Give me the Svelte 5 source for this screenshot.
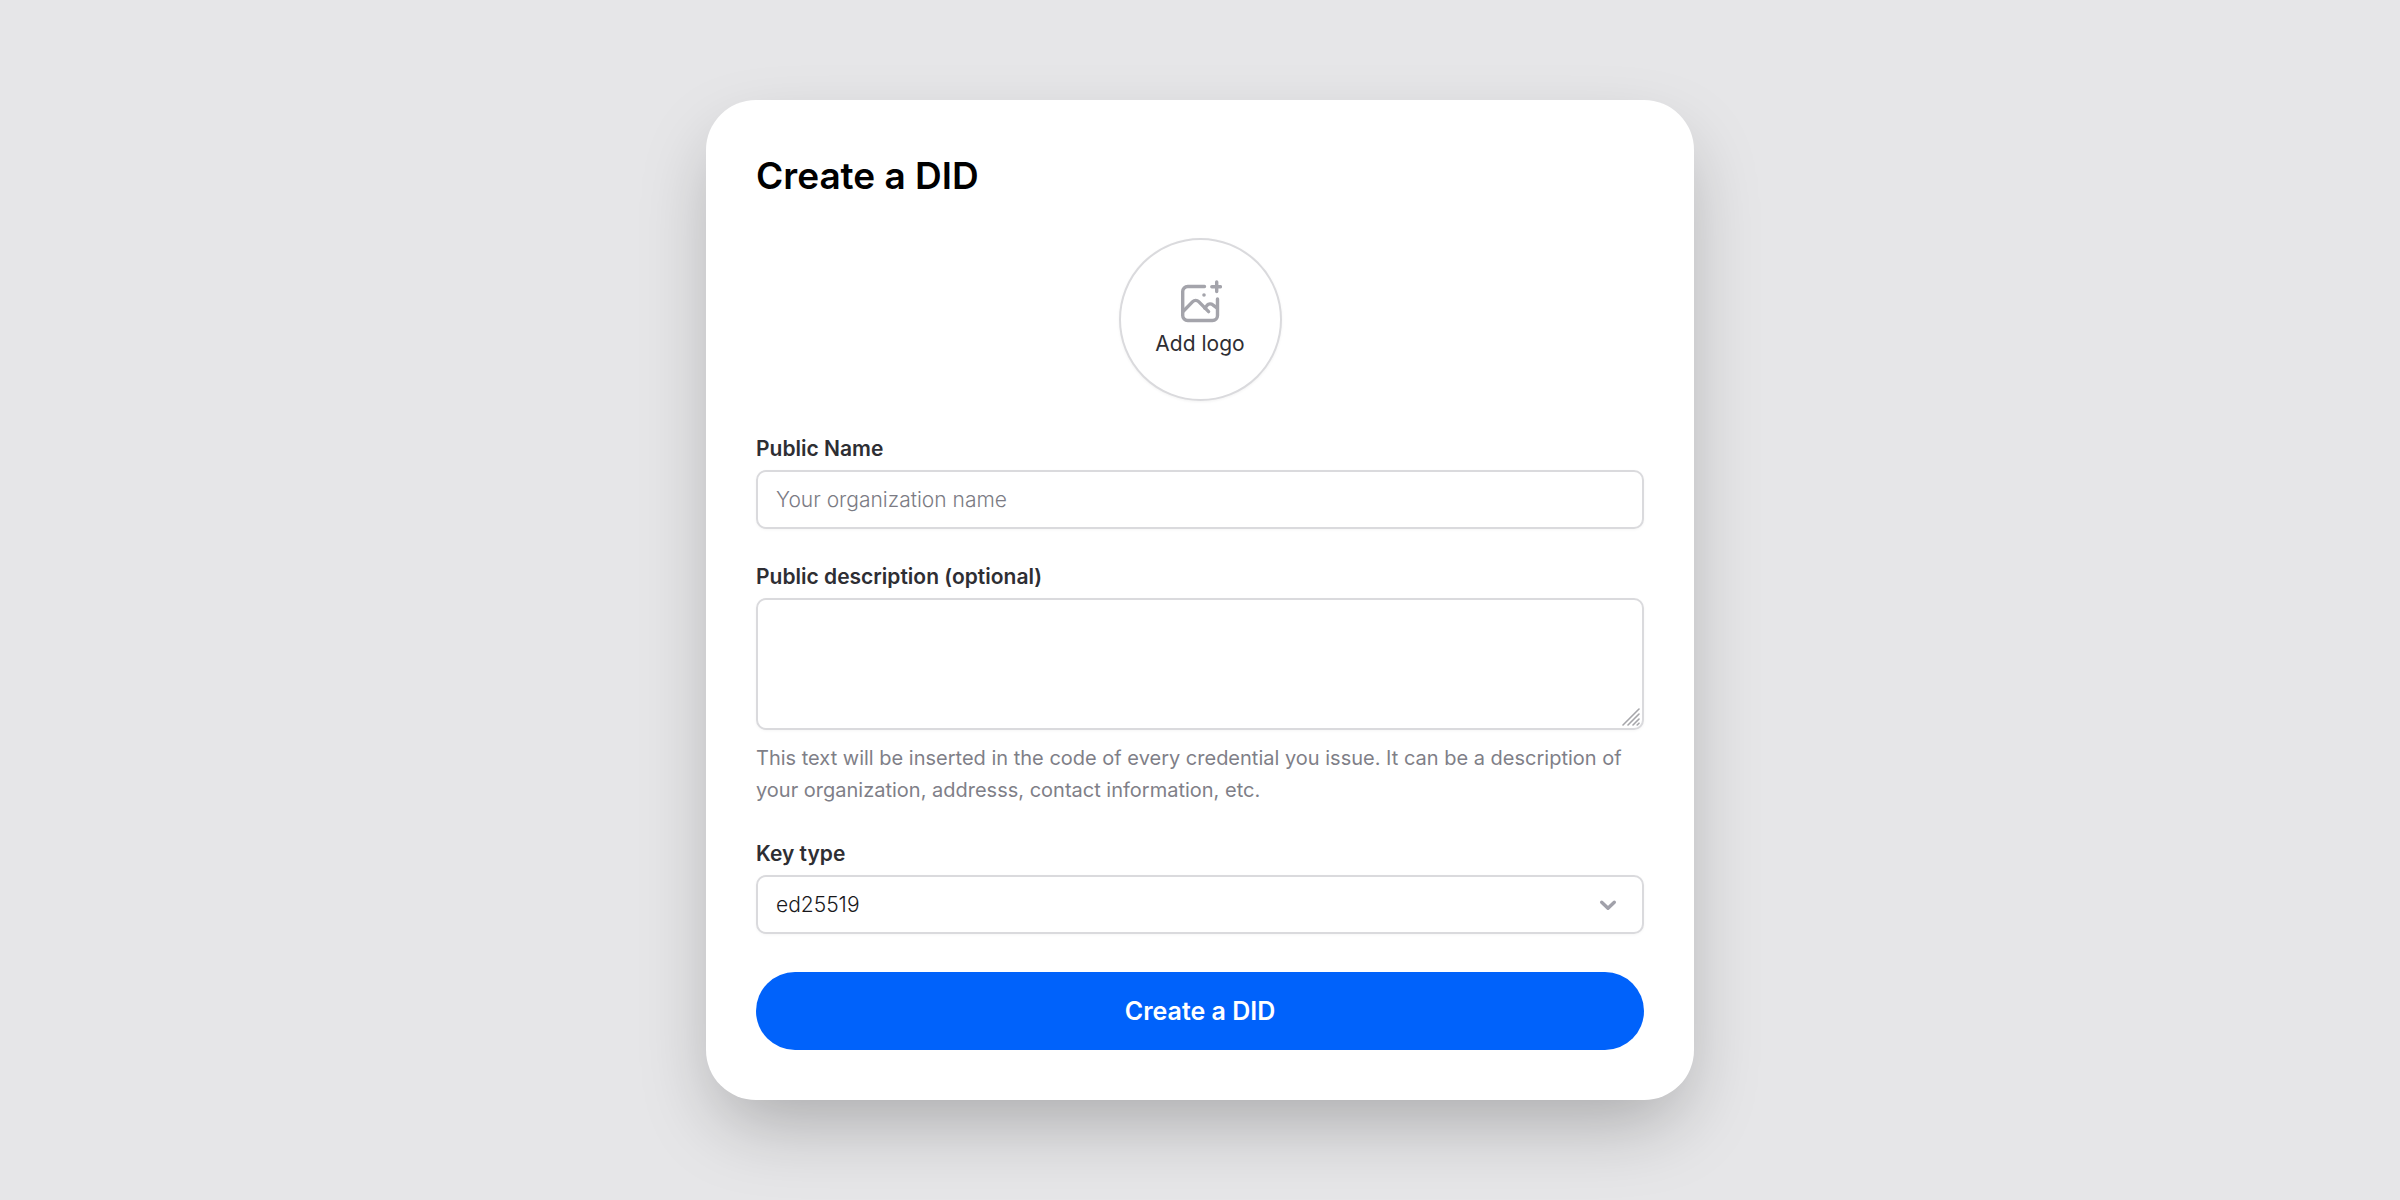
<script>
  let publicName = $state('');
  let description = $state('');
  let keyType = $state('ed25519');
</script>

<main class="page">
  <form class="card" onsubmit={(event) => event.preventDefault()}>
    <h1 class="title">Create a DID</h1>

    <button class="logo" type="button">
      <svg class="logo-icon" viewBox="0 0 44 44" aria-hidden="true">
        <path d="M26.5 6.5H9.7a5 5 0 0 0-5 5v24a5 5 0 0 0 5 5h24.8a5 5 0 0 0 5-5V19" />
        <path d="M5.5 31l9.2-9.4a4.2 4.2 0 0 1 6 0L30.6 31.6" />
        <path d="M26.8 28.2l2.4-3a4 4 0 0 1 5.6-.4l4.4 3.4" />
        <path d="M38.7 1.9v9.6M33.8 6.7h8.6" />
        <circle cx="26" cy="15" r="1.8" />
      </svg>
      <span>Add logo</span>
    </button>

    <div class="field">
      <label for="public-name">Public Name</label>
      <input id="public-name" type="text" placeholder="Your organization name" bind:value={publicName} />
    </div>

    <div class="field">
      <label for="description">Public description (optional)</label>
      <div class="control">
        <textarea id="description" aria-describedby="description-help" bind:value={description}></textarea>
        <svg class="grip" viewBox="0 0 20 20" aria-hidden="true">
          <path d="M1 17L17 1M6 17L17 6M11 17l6-6M15.2 17l1.8-1.8" />
        </svg>
      </div>
      <p class="help" id="description-help">
        This text will be inserted in the code of every credential you issue. It can be a description of
        your organization, addresss, contact information, etc.
      </p>
    </div>

    <div class="field">
      <label for="key-type">Key type</label>
      <div class="control">
        <select id="key-type" bind:value={keyType}>
          <option value="ed25519">ed25519</option>
        </select>
        <svg class="chevron" viewBox="0 0 20 20" aria-hidden="true">
          <path d="M3.7 7.2L10 13.3l6.3-6.1" />
        </svg>
      </div>
    </div>

    <button class="submit" type="submit">Create a DID</button>
  </form>
</main>

<style>
  :global(body) {
    margin: 0;
    background: #e6e6e8;
  }

  .page {
    box-sizing: border-box;
    display: flex;
    align-items: center;
    justify-content: center;
    min-height: 100vh;
    padding: 40px;
    color: #2e2e33;
    font-family: Inter, 'Liberation Sans', sans-serif;
    font-size: 21px;
    line-height: 32px;
  }

  .card {
    box-sizing: border-box;
    display: flex;
    flex-direction: column;
    width: 100%;
    max-width: 988px;
    padding: 50px;
    border-radius: 50px;
    background: #fff;
    box-shadow: 0 32px 76px -12px rgba(0, 0, 0, 0.27);
  }

  .title {
    margin: 0 0 36px;
    color: #000;
    font-size: 37px;
    font-weight: 600;
    line-height: 52px;
  }

  .logo {
    box-sizing: border-box;
    display: flex;
    flex-direction: column;
    align-items: center;
    align-self: center;
    gap: 4px;
    width: 163px;
    height: 163px;
    margin: 0 0 32px;
    padding: 40px 0 0;
    border: 2px solid #dadadd;
    border-radius: 50%;
    background: #fff;
    box-shadow: 0 1px 3px rgba(0, 0, 0, 0.05);
    color: inherit;
    font: inherit;
  }

  .logo-icon {
    flex: none;
    width: 44px;
    height: 44px;
    fill: none;
    stroke: #a4a4ab;
    stroke-width: 3.4;
    stroke-linecap: round;
    stroke-linejoin: round;
  }

  .logo-icon circle {
    fill: #a4a4ab;
    stroke: none;
  }

  .field {
    display: flex;
    flex-direction: column;
    gap: 5px;
    margin-bottom: 32px;
  }

  label {
    font-weight: 600;
  }

  input,
  select,
  textarea {
    box-sizing: border-box;
    display: block;
    width: 100%;
    height: 59px;
    margin: 0;
    padding: 0 18px;
    border: 2px solid #dadadd;
    border-radius: 10px;
    background: #fff;
    box-shadow: 0 1px 3px rgba(0, 0, 0, 0.04);
    color: #18181b;
    font: inherit;
    font-weight: 300;
    appearance: none;
  }

  input::placeholder {
    color: #7b7b84;
    opacity: 1;
  }

  textarea {
    height: 132px;
    padding: 12px 18px;
    resize: none;
  }

  .control {
    position: relative;
  }

  .grip {
    position: absolute;
    right: 2px;
    bottom: 2px;
    width: 20px;
    height: 20px;
    fill: none;
    stroke: #a6a6aa;
    stroke-width: 1.6;
    stroke-linecap: round;
    pointer-events: none;
  }

  .chevron {
    position: absolute;
    top: 20px;
    right: 26px;
    width: 20px;
    height: 20px;
    fill: none;
    stroke: #a1a1aa;
    stroke-width: 3.4;
    stroke-linecap: round;
    stroke-linejoin: round;
    pointer-events: none;
  }

  .help {
    margin: 7px 0 0;
    color: #7f7f88;
    font-size: 20px;
    font-weight: 400;
  }

  .submit {
    height: 78px;
    margin: 6px 0 0;
    padding: 0 40px;
    border: 0;
    border-radius: 40px;
    background: #0062fb;
    color: #fff;
    font: inherit;
    font-size: 25px;
    font-weight: 600;
  }
</style>
